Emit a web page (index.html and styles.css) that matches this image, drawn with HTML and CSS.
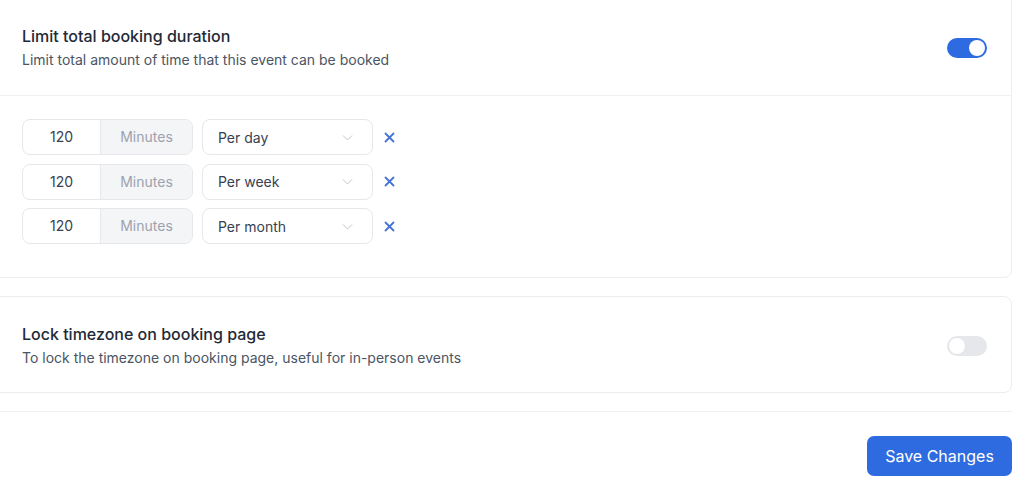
FILE: index.html
```html
<!DOCTYPE html>
<html>
<head lang="en">
    <meta charset="UTF-8">
    <title>Limits</title>
    <link rel="stylesheet" href="styles.css">
</head>
<body>
<div class="page">
    <!-- booking duration card -->
    <div class="card">
        <div class="card-head">
            <div class="card-text">
                <div class="card-title">Limit total booking duration</div>
                <div class="card-desc">Limit total amount of time that this event can be booked</div>
            </div>
            <span class="switch on"><span class="knob"></span></span>
        </div>
        <div class="card-body">
            <div class="limit-row">
                <div class="duration">
                    <span class="duration-value">120</span>
                    <span class="duration-unit">Minutes</span>
                </div>
                <div class="period">
                    <span>Per day</span>
                    <svg class="chevron" width="11" height="7" viewBox="0 0 11 7"><path d="M1 1.5l4.5 4.5 4.5-4.5" fill="none" stroke="#c3c6cc" stroke-width="1"/></svg>
                </div>
                <svg class="remove" width="11" height="11" viewBox="0 0 11 11"><path d="M1.5 1.5l8 8M9.5 1.5l-8 8" stroke="#4473d6" stroke-width="1.8" stroke-linecap="round"/></svg>
            </div>
            <div class="limit-row">
                <div class="duration">
                    <span class="duration-value">120</span>
                    <span class="duration-unit">Minutes</span>
                </div>
                <div class="period">
                    <span>Per week</span>
                    <svg class="chevron" width="11" height="7" viewBox="0 0 11 7"><path d="M1 1.5l4.5 4.5 4.5-4.5" fill="none" stroke="#c3c6cc" stroke-width="1"/></svg>
                </div>
                <svg class="remove" width="11" height="11" viewBox="0 0 11 11"><path d="M1.5 1.5l8 8M9.5 1.5l-8 8" stroke="#4473d6" stroke-width="1.8" stroke-linecap="round"/></svg>
            </div>
            <div class="limit-row">
                <div class="duration">
                    <span class="duration-value">120</span>
                    <span class="duration-unit">Minutes</span>
                </div>
                <div class="period">
                    <span>Per month</span>
                    <svg class="chevron" width="11" height="7" viewBox="0 0 11 7"><path d="M1 1.5l4.5 4.5 4.5-4.5" fill="none" stroke="#c3c6cc" stroke-width="1"/></svg>
                </div>
                <svg class="remove" width="11" height="11" viewBox="0 0 11 11"><path d="M1.5 1.5l8 8M9.5 1.5l-8 8" stroke="#4473d6" stroke-width="1.8" stroke-linecap="round"/></svg>
            </div>
        </div>
    </div>

    <!-- timezone card -->
    <div class="card card-single">
        <div class="card-head tz-head">
            <div class="card-text">
                <div class="card-title">Lock timezone on booking page</div>
                <div class="card-desc">To lock the timezone on booking page, useful for in-person events</div>
            </div>
            <span class="switch"><span class="knob"></span></span>
        </div>
    </div>

    <div class="footer">
        <a class="save-btn" href="javascript:void(0);">Save Changes</a>
    </div>
</div>
</body>
</html>
```
FILE: styles.css
```css
body {
    margin: 0;
    background: #ffffff;
    font-family: Inter, "Noto Sans", "Liberation Sans", sans-serif;
    color: #1f2937;
}

.page {
    width: 1022px;
    margin: -1px 0 0 -10px;
}

.card {
    border: 1px solid #ededef;
    border-radius: 0 0 8px 8px;
    background: #ffffff;
}
.card-single {
    margin-top: 18px;
    border-radius: 8px;
}

.card-head {
    display: flex;
    align-items: center;
    justify-content: space-between;
    padding: 26px 24px 25px 31px;
    border-bottom: 1px solid #f1f1f3;
}
.tz-head {
    padding-top: 27px;
    padding-bottom: 24px;
    border-bottom: none;
}

.card-title {
    font-size: 16px;
    line-height: 20px;
    font-weight: 500;
    color: #1f2937;
}
.card-desc {
    margin-top: 4px;
    font-size: 14px;
    line-height: 20px;
    color: #4b5563;
}

/* toggle */
.switch {
    display: flex;
    align-items: center;
    width: 40px;
    height: 20px;
    padding: 2px;
    box-sizing: border-box;
    border-radius: 10px;
    background: #e5e7eb;
}
.switch .knob {
    width: 16px;
    height: 16px;
    border-radius: 50%;
    background: #ffffff;
    box-shadow: 0 0 0 1px #e2e4e8;
}
.switch.on {
    background: #2e6be0;
    justify-content: flex-end;
}
.switch.on .knob {
    box-shadow: none;
}

.card-body {
    display: flex;
    flex-direction: column;
    gap: 8.5px;
    padding: 23px 24px 33px 31px;
}

.limit-row {
    display: flex;
    align-items: center;
    height: 36px;
}

.duration {
    display: flex;
    width: 171px;
    height: 36px;
    box-sizing: border-box;
    border: 1px solid #e5e7eb;
    border-radius: 8px;
    overflow: hidden;
    font-size: 14px;
}
.duration-value {
    width: 77px;
    line-height: 34px;
    text-align: center;
    color: #374151;
    border-right: 1px solid #e5e7eb;
}
.duration-unit {
    flex: 1;
    line-height: 34px;
    text-align: center;
    color: #9ca3af;
    background: #f4f5f7;
}

.period {
    display: flex;
    align-items: center;
    justify-content: space-between;
    width: 171px;
    height: 36px;
    box-sizing: border-box;
    margin-left: 9px;
    padding: 0 19px 0 15px;
    border: 1px solid #e5e7eb;
    border-radius: 8px;
    font-size: 14px;
    color: #374151;
}

.remove {
    margin-left: 11px;
}

.footer {
    display: flex;
    justify-content: flex-end;
    margin-top: 18px;
    padding-top: 24px;
    border-top: 1px solid #f0f0f2;
}
.save-btn {
    display: block;
    width: 145px;
    height: 40px;
    line-height: 40px;
    text-align: center;
    border-radius: 7px;
    background: #2e6be0;
    color: #ffffff;
    font-size: 16px;
    font-weight: 400;
    text-decoration: none;
}
```
